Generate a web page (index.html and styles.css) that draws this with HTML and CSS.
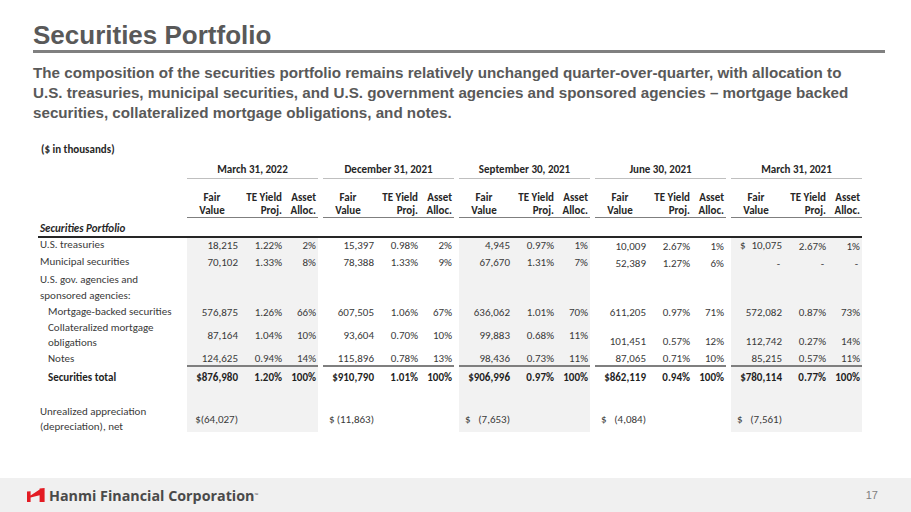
FILE: index.html
```html
<!DOCTYPE html>
<html lang="en">
<head>
<meta charset="utf-8">
<title>Securities Portfolio</title>
<link rel="stylesheet" href="styles.css">
</head>
<body>
<div class="slide">
  <h1 class="title">Securities Portfolio</h1>
  <p class="lead">The composition of the securities portfolio remains relatively unchanged quarter-over-quarter, with allocation to<br>U.S. treasuries, municipal securities, and U.S. government agencies and sponsored agencies – mortgage backed<br>securities, collateralized mortgage obligations, and notes.</p>

  <section class="tbl">
    <div class="units">($ in thousands)</div>

    <div class="row dates">
      <div class="lbl"></div>
      <div class="grp">March 31, 2022</div>
      <div class="grp">December 31, 2021</div>
      <div class="grp">September 30, 2021</div>
      <div class="grp">June 30, 2021</div>
      <div class="grp">March 31, 2021</div>
    </div>

    <div class="row subhead">
      <div class="lbl"></div>
      <div class="grp"><span class="c c1">Fair<br>Value</span><span class="c c2">TE Yield<br>Proj.</span><span class="c c3">Asset<br>Alloc.</span></div>
      <div class="grp"><span class="c c1">Fair<br>Value</span><span class="c c2">TE Yield<br>Proj.</span><span class="c c3">Asset<br>Alloc.</span></div>
      <div class="grp"><span class="c c1">Fair<br>Value</span><span class="c c2">TE Yield<br>Proj.</span><span class="c c3">Asset<br>Alloc.</span></div>
      <div class="grp"><span class="c c1">Fair<br>Value</span><span class="c c2">TE Yield<br>Proj.</span><span class="c c3">Asset<br>Alloc.</span></div>
      <div class="grp"><span class="c c1">Fair<br>Value</span><span class="c c2">TE Yield<br>Proj.</span><span class="c c3">Asset<br>Alloc.</span></div>
    </div>

    <div class="section">Securities Portfolio</div>

    <div class="row r-tre">
      <div class="lbl">U.S. treasuries</div>
      <div class="grp sh"><span class="c c1">18,215</span><span class="c c2">1.22%</span><span class="c c3">2%</span></div>
      <div class="grp"><span class="c c1">15,397</span><span class="c c2">0.98%</span><span class="c c3">2%</span></div>
      <div class="grp sh"><span class="c c1">4,945</span><span class="c c2">0.97%</span><span class="c c3">1%</span></div>
      <div class="grp low"><span class="c c1">10,009</span><span class="c c2">2.67%</span><span class="c c3">1%</span></div>
      <div class="grp sh"><span class="c c1 dol"><span>$</span><span>10,075</span></span><span class="c c2 low">2.67%</span><span class="c c3 low">1%</span></div>
    </div>

    <div class="row r-mun">
      <div class="lbl">Municipal securities</div>
      <div class="grp sh"><span class="c c1">70,102</span><span class="c c2">1.33%</span><span class="c c3">8%</span></div>
      <div class="grp"><span class="c c1">78,388</span><span class="c c2">1.33%</span><span class="c c3">9%</span></div>
      <div class="grp sh"><span class="c c1">67,670</span><span class="c c2">1.31%</span><span class="c c3">7%</span></div>
      <div class="grp low"><span class="c c1">52,389</span><span class="c c2">1.27%</span><span class="c c3">6%</span></div>
      <div class="grp sh low"><span class="c c1 dash">-</span><span class="c c2 dash">-</span><span class="c c3 dash">-</span></div>
    </div>

    <div class="row r-gov">
      <div class="lbl">U.S. gov. agencies and<br>sponsored agencies:</div>
      <div class="grp sh"></div>
      <div class="grp"></div>
      <div class="grp sh"></div>
      <div class="grp"></div>
      <div class="grp sh"></div>
    </div>

    <div class="row r-mbs">
      <div class="lbl ind">Mortgage-backed securities</div>
      <div class="grp sh"><span class="c c1">576,875</span><span class="c c2">1.26%</span><span class="c c3">66%</span></div>
      <div class="grp"><span class="c c1">607,505</span><span class="c c2">1.06%</span><span class="c c3">67%</span></div>
      <div class="grp sh"><span class="c c1">636,062</span><span class="c c2">1.01%</span><span class="c c3">70%</span></div>
      <div class="grp"><span class="c c1">611,205</span><span class="c c2">0.97%</span><span class="c c3">71%</span></div>
      <div class="grp sh"><span class="c c1">572,082</span><span class="c c2">0.87%</span><span class="c c3">73%</span></div>
    </div>

    <div class="row r-cmo">
      <div class="lbl ind">Collateralized mortgage<br>obligations</div>
      <div class="grp sh"><span class="c c1">87,164</span><span class="c c2">1.04%</span><span class="c c3">10%</span></div>
      <div class="grp"><span class="c c1">93,604</span><span class="c c2">0.70%</span><span class="c c3">10%</span></div>
      <div class="grp sh"><span class="c c1">99,883</span><span class="c c2">0.68%</span><span class="c c3">11%</span></div>
      <div class="grp bot"><span class="c c1">101,451</span><span class="c c2">0.57%</span><span class="c c3">12%</span></div>
      <div class="grp sh bot"><span class="c c1">112,742</span><span class="c c2">0.27%</span><span class="c c3">14%</span></div>
    </div>

    <div class="row r-notes">
      <div class="lbl ind">Notes</div>
      <div class="grp sh"><span class="c c1">124,625</span><span class="c c2">0.94%</span><span class="c c3">14%</span></div>
      <div class="grp"><span class="c c1">115,896</span><span class="c c2">0.78%</span><span class="c c3">13%</span></div>
      <div class="grp sh"><span class="c c1">98,436</span><span class="c c2">0.73%</span><span class="c c3">11%</span></div>
      <div class="grp"><span class="c c1">87,065</span><span class="c c2">0.71%</span><span class="c c3">10%</span></div>
      <div class="grp sh"><span class="c c1">85,215</span><span class="c c2">0.57%</span><span class="c c3">11%</span></div>
    </div>

    <div class="row r-total">
      <div class="lbl ind">Securities total</div>
      <div class="grp sh"><span class="c c1">$876,980</span><span class="c c2">1.20%</span><span class="c c3">100%</span></div>
      <div class="grp"><span class="c c1">$910,790</span><span class="c c2">1.01%</span><span class="c c3">100%</span></div>
      <div class="grp sh"><span class="c c1">$906,996</span><span class="c c2">0.97%</span><span class="c c3">100%</span></div>
      <div class="grp"><span class="c c1">$862,119</span><span class="c c2">0.94%</span><span class="c c3">100%</span></div>
      <div class="grp sh"><span class="c c1">$780,114</span><span class="c c2">0.77%</span><span class="c c3">100%</span></div>
    </div>

    <div class="row r-unr">
      <div class="lbl">Unrealized appreciation<br>(depreciation), net</div>
      <div class="grp sh"><span class="c c1">$(64,027)</span></div>
      <div class="grp"><span class="c c1 dol"><span>$</span><span>(11,863)</span></span></div>
      <div class="grp sh"><span class="c c1 dol"><span>$</span><span>(7,653)</span></span></div>
      <div class="grp"><span class="c c1 dol"><span>$</span><span>(4,084)</span></span></div>
      <div class="grp sh"><span class="c c1 dol"><span>$</span><span>(7,561)</span></span></div>
    </div>
  </section>

  <footer class="foot">
    <div class="brand">
      <svg class="mark" viewBox="0 0 18 14" width="18" height="14" aria-hidden="true">
        <path d="M0 3.5 L3.6 3.2 L3.6 7.4 L12.6 1.6 L12.6 0.4 L17.6 0 L17.6 14 L12.6 14 L12.6 7.2 L3.6 9.6 L3.6 14 L0 14 Z" fill="#e31b23"/>
      </svg>
      <span class="name">Hanmi Financial Corporation<sup>™</sup></span>
    </div>
    <span class="page">17</span>
  </footer>
</div>
</body>
</html>
```

FILE: styles.css
```css
* { box-sizing: border-box; }
html, body { margin: 0; padding: 0; background: #fff; }
body { font-family: "Liberation Sans", Arial, sans-serif; }

.slide {
  width: 911px;
  height: 512px;
  display: flex;
  flex-direction: column;
  overflow: hidden;
}

.title {
  margin: 20px 26px 0 33px;
  padding: 0;
  font-size: 26px;
  line-height: 30px;
  font-weight: bold;
  color: #595959;
  border-bottom: 3px solid #808080;
}

.lead {
  margin: 10px 0 0 33px;
  font-size: 15.2px;
  line-height: 20px;
  font-weight: bold;
  color: #595959;
  white-space: nowrap;
}

.tbl {
  margin: 20px 0 0 38px;
  width: 824px;
  font-family: "Carlito", "Lato", sans-serif;
  font-size: 11px;
  color: #3a3a3a;
}

.units {
  padding-left: 3px;
  font-weight: bold;
  line-height: 14px;
  color: #262626;
}

.row {
  display: grid;
  grid-template-columns: 144px repeat(5, 131px);
  column-gap: 5px;
}

.lbl { padding-left: 2px; line-height: 14px; white-space: nowrap; }
.lbl.ind { padding-left: 10px; }

.grp { display: flex; white-space: nowrap; }
.c { display: block; text-align: right; }
.c1 { width: 51px; }
.c2 { width: 44px; }
.c3 { width: 34px; }
.sh { background: #f2f2f2; }

.dates { margin-top: 3px; height: 19px; }
.dates .grp {
  justify-content: center;
  align-items: center;
  font-weight: bold;
  color: #262626;
  border-bottom: 1px solid #bfbfbf;
}

.subhead { margin-top: 11px; }
.subhead .grp {
  font-weight: bold;
  color: #262626;
  line-height: 13px;
  padding-top: 1px;
  border-bottom: 1px solid #7f7f7f;
}
.subhead .c1 { text-align: center; width: 44px; margin-left: 3px; margin-right: 4px; }

.section {
  margin-top: 4px;
  padding-left: 2px;
  line-height: 14px;
  font-weight: bold;
  font-style: italic;
  color: #262626;
  border-bottom: 2px solid #262626;
}

.r-tre .grp, .r-mun .grp, .r-mbs .grp, .r-cmo .grp, .r-notes .grp, .r-total .grp { align-items: center; }
.r-tre .lbl, .r-mun .lbl, .r-mbs .lbl, .r-cmo .lbl, .r-notes .lbl, .r-total .lbl { align-self: center; }

.r-tre { height: 14px; }
.r-mun { height: 20px; }
.r-gov { height: 33px; }
.r-gov .lbl { line-height: 16px; }
.r-mbs { height: 14px; }
.r-cmo { height: 32px; }
.r-cmo .lbl { line-height: 15px; }
.r-cmo .grp.bot { align-items: flex-end; padding-bottom: 3px; }
.r-notes { height: 16px; }
.r-notes .grp { border-bottom: 2px solid #7f7f7f; }
.r-total { height: 21px; font-weight: bold; color: #1f1f1f; }
.r-unr { height: 44px; }
.r-unr .lbl { align-self: end; line-height: 15px; margin-bottom: -2px; }
.r-unr .grp { align-items: flex-end; padding-bottom: 6px; }

.grp.low .c, .c.low { position: relative; top: 1px; }

.dol { display: flex; justify-content: space-between; padding-left: 9px; }
.r-unr .dol { padding-left: 6px; }
.dash { padding-right: 2px; }

.foot {
  margin-top: auto;
  height: 34px;
  background: #f0f0f0;
  display: flex;
  align-items: center;
  justify-content: space-between;
  padding: 0 33px 0 27px;
}
.brand { display: flex; align-items: center; gap: 4px; }
.mark { display: block; }
.name {
  font-family: "Open Sans", sans-serif;
  font-weight: 700;
  font-size: 14.3px;
  color: #4a4a4a;
  letter-spacing: 0;
}
.name sup { font-size: 5px; vertical-align: 4px; font-weight: normal; }
.page {
  font-family: "Liberation Sans", Arial, sans-serif;
  font-size: 11px;
  color: #7f7f7f;
}
```
